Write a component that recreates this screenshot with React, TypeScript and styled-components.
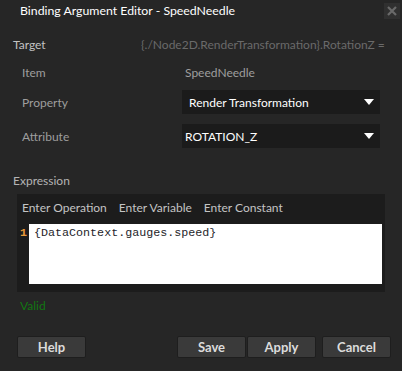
import React from "react";
import styled, { createGlobalStyle } from "styled-components";

const Global = createGlobalStyle`
  html, body { margin: 0; padding: 0; background: #262626; }
  * { box-sizing: border-box; }
`;

const Window = styled.div`
  width: 402px;
  height: 371px;
  background: #262626;
  font-family: Lato, "Noto Sans", sans-serif;
  font-size: 12px;
  color: #c8c8c8;
  display: flex;
  flex-direction: column;
  overflow: hidden;
`;

const TitleBar = styled.div`
  height: 20px;
  display: flex;
  align-items: center;
  justify-content: space-between;
  padding: 0 2px 0 20px;
`;

const Title = styled.span`
  color: #ffffff;
  font-size: 12.3px;
`;

const CloseBox = styled.div`
  width: 16px;
  height: 16px;
  margin-top: 1px;
  background: #303030;
  display: flex;
  align-items: center;
  justify-content: center;
`;

const Body = styled.div`
  display: flex;
  flex-direction: column;
  padding: 0 0 0 13px;
`;

const TargetRow = styled.div`
  display: flex;
  align-items: center;
  height: 20px;
  margin-top: 14px;
  white-space: nowrap;
`;

const TargetLabel = styled.span`
  width: 128px;
  color: #c2c2c2;
`;

const TargetValue = styled.span`
  color: #6a6a6a;
`;

const Fields = styled.div`
  display: flex;
  flex-direction: column;
  padding-left: 9px;
  margin-top: 8px;
`;

const Row = styled.div<{ $h: number; $mt?: number }>`
  display: flex;
  align-items: center;
  height: ${(p) => p.$h}px;
  margin-top: ${(p) => p.$mt ?? 0}px;
`;

const Label = styled.span`
  width: 160px;
  color: #9e9e9e;
`;

const Value = styled.span`
  color: #9e9e9e;
  padding-left: 3px;
`;

const Select = styled.div`
  width: 198px;
  height: 24px;
  background: #1b1b1b;
  color: #ffffff;
  display: flex;
  align-items: center;
  justify-content: space-between;
  padding: 0 6px 0 7px;
`;

const SelectText = styled.span<{ $pl?: number }>`
  margin-left: ${(p) => p.$pl ?? 0}px;
`;

const SectionLabel = styled.div`
  color: #b4b4b4;
  height: 20px;
  display: flex;
  align-items: center;
  margin-top: 22px;
`;

const Panel = styled.div`
  margin: 4px 0 0 4px;
  width: 368px;
  height: 98px;
  background: #1c1c1c;
  display: flex;
  flex-direction: column;
  padding: 0 3px 8px 3px;
`;

const Tabs = styled.div`
  display: flex;
  gap: 12px;
  height: 26px;
  align-items: center;
  padding-left: 2px;
  color: #c4c4c4;
`;

const EditorRow = styled.div`
  display: flex;
  flex: 1;
  margin-top: 4px;
`;

const Gutter = styled.div`
  width: 9px;
  color: #e89a3a;
  font-family: "Liberation Mono", monospace;
  font-size: 11.7px;
  font-weight: bold;
  padding-top: 2px;
`;

const Editor = styled.div`
  flex: 1;
  background: #ffffff;
  color: #1e1e2a;
  font-family: "Liberation Mono", monospace;
  font-size: 11.7px;
  padding: 2px 0 0 5px;
`;

const Status = styled.div`
  color: #127812;
  height: 20px;
  display: flex;
  align-items: center;
  margin: 3px 0 0 7px;
`;

const Footer = styled.div`
  display: flex;
  align-items: center;
  margin: 21px 0 0 4px;
`;

const Button = styled.button<{ $ml?: number }>`
  width: 69px;
  height: 22px;
  margin-left: ${(p) => p.$ml ?? 0}px;
  background: #3a3a3a;
  border: 1px solid #1e1e1e;
  border-radius: 2px;
  color: #dcdcdc;
  font-family: Lato, "Noto Sans", sans-serif;
  font-size: 13px;
  font-weight: 700;
  padding: 0;
  display: flex;
  align-items: center;
  justify-content: center;
`;

const Arrow = () => (
  <svg width="10" height="6" viewBox="0 0 10 6">
    <polygon points="0,0 10,0 5,6" fill="#ffffff" />
  </svg>
);

export default function App() {
  return (
    <>
      <Global />
      <Window>
        <TitleBar>
          <Title>Binding Argument Editor - SpeedNeedle</Title>
          <CloseBox>
            <svg width="10" height="10" viewBox="0 0 10 10">
              <path d="M1 1 L9 9 M9 1 L1 9" stroke="#6a6a6a" strokeWidth="2.2" />
            </svg>
          </CloseBox>
        </TitleBar>
        <Body>
          <TargetRow>
            <TargetLabel>Target</TargetLabel>
            <TargetValue>{"{./Node2D.RenderTransformation}.RotationZ ="}</TargetValue>
          </TargetRow>
          <Fields>
            <Row $h={20}>
              <Label>Item</Label>
              <Value>SpeedNeedle</Value>
            </Row>
            <Row $h={24} $mt={8}>
              <Label>Property</Label>
              <Select>
                <SelectText>Render Transformation</SelectText>
                <Arrow />
              </Select>
            </Row>
            <Row $h={24} $mt={10}>
              <Label>Attribute</Label>
              <Select>
                <SelectText $pl={-4}>ROTATION_Z</SelectText>
                <Arrow />
              </Select>
            </Row>
          </Fields>
          <SectionLabel>Expression</SectionLabel>
          <Panel>
            <Tabs>
              <span>Enter Operation</span>
              <span>Enter Variable</span>
              <span>Enter Constant</span>
            </Tabs>
            <EditorRow>
              <Gutter>1</Gutter>
              <Editor>{"{DataContext.gauges.speed}"}</Editor>
            </EditorRow>
          </Panel>
          <Status>Valid</Status>
          <Footer>
            <Button>Help</Button>
            <Button $ml={91}>Save</Button>
            <Button $ml={1}>Apply</Button>
            <Button $ml={6}>Cancel</Button>
          </Footer>
        </Body>
      </Window>
    </>
  );
}
